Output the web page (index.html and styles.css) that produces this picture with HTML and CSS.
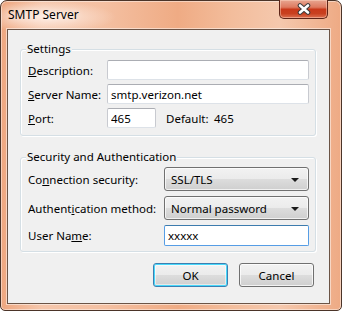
FILE: index.html
```html
<!DOCTYPE html>
<html lang="en">
<head>
    <meta charset="UTF-8">
    <title>SMTP Server</title>
    <link rel="stylesheet" href="styles.css">
</head>
<body>
    <div class="window">
        <div class="titlebar">
            <span class="title">SMTP Server</span>
            <div class="close">
                <svg width="14" height="12" viewBox="0 0 14 12">
                    <path d="M3 2.5 L11 9.5 M11 2.5 L3 9.5" stroke="#3c3c3c" stroke-width="4.6" stroke-linecap="round"/>
                    <path d="M3 2.5 L11 9.5 M11 2.5 L3 9.5" stroke="#fff" stroke-width="2.6" stroke-linecap="round"/>
                </svg>
            </div>
        </div>
        <div class="client">
            <fieldset class="group settings">
                <legend>Settings</legend>
                <label><u>D</u>escription:</label>
                <input class="field" type="text" value="">
                <label><u>S</u>erver Name:</label>
                <input class="field" type="text" value="smtp.verizon.net">
                <label><u>P</u>ort:</label>
                <div class="port">
                    <input class="field short" type="text" value="465">
                    <span class="default-label">Default:</span>
                    <span>465</span>
                </div>
            </fieldset>

            <fieldset class="group security">
                <legend>Security and Authentication</legend>
                <label>Co<u>n</u>nection security:</label>
                <div class="combo"><span>SSL/TLS</span><span class="arrow"></span></div>
                <label>Authent<u>i</u>cation method:</label>
                <div class="combo"><span>Normal password</span><span class="arrow"></span></div>
                <label>User Na<u>m</u>e:</label>
                <input class="field focus" type="text" value="xxxxx">
            </fieldset>

            <div class="buttons">
                <button class="btn default-btn">OK</button>
                <button class="btn">Cancel</button>
            </div>
        </div>
    </div>
</body>
</html>
```

FILE: styles.css
```css
html, body {
    margin: 0;
    padding: 0;
    background: #fff;
}
body {
    font-family: "Noto Sans", "Open Sans", sans-serif;
    font-size: 11.5px;
    color: #000;
}
.window {
    box-sizing: border-box;
    width: 342px;
    height: 311px;
    border: 1px solid #4b3428;
    border-radius: 7px 7px 5px 5px;
    padding: 0 11px 6px 6px;
    background:
        radial-gradient(ellipse 70px 16px at 45px 16px, rgba(255, 240, 232, 0.9), rgba(255, 240, 232, 0) 100%),
        linear-gradient(90deg, #eea780 0%, #f5c6ab 12%, #f4c0a2 30%, #efab84 52%, #f3bd9c 68%, #f5c8ad 82%, #eeaa84 100%);
    box-shadow: inset 0 0 0 1px rgba(255, 255, 255, 0.45);
}
.titlebar {
    display: flex;
    align-items: flex-start;
    height: 28px;
}
.title {
    margin: 6px 0 0 1px;
    font-size: 12px;
    line-height: 16px;
    text-shadow: 0 0 6px rgba(255, 255, 255, 0.9);
}
.close {
    margin: -1px 2px 0 auto;
    width: 49px;
    height: 19px;
    box-sizing: border-box;
    border: 1px solid #5e2417;
    border-top: none;
    border-radius: 0 0 5px 5px;
    background: linear-gradient(#e8a690 0%, #de7a60 40%, #c9391a 52%, #c8401f 75%, #dc7050 100%);
    box-shadow: inset 0 0 0 1px rgba(255, 220, 200, 0.45);
    display: flex;
    align-items: center;
    justify-content: center;
}
.close svg {
    display: block;
}
.client {
    box-sizing: border-box;
    height: 275px;
    border: 1px solid #6b5446;
    background: #f0f0f0;
    box-shadow: 0 0 0 1px rgba(255, 255, 255, 0.5);
    display: flex;
    flex-direction: column;
}
.group {
    display: grid;
    align-items: center;
    margin: 11px 13px 0 12px;
    border: 1px solid #d5dfe5;
    border-radius: 3px;
    box-shadow: 1px 1px 0 #fff, inset 1px 1px 0 #fff;
    min-width: 0;
}
.group legend {
    margin-left: -2px;
    padding: 0 1px;
    line-height: 16px;
    background: #f0f0f0;
}
.settings {
    grid-template-columns: 79px 202px;
    grid-auto-rows: 20px;
    row-gap: 4px;
    padding: 3px 6px 7px 7px;
}
.security {
    grid-template-columns: 136px 145px;
    grid-template-rows: 24px 24px 21px;
    row-gap: 5px;
    margin-top: 13px;
    padding: 2px 6px 5px 7px;
}
.field {
    box-sizing: border-box;
    height: 100%;
    width: 100%;
    margin: 0;
    padding: 0 3px;
    font: inherit;
    color: #000;
    background: #fff;
    border: 1px solid #c8cad0;
    border-top-color: #abadb3;
    border-bottom-color: #dde2e8;
    border-radius: 2px;
    outline: none;
}
.field.focus {
    border-color: #569de5;
    border-top-color: #3d7bad;
}
.port {
    display: flex;
    align-items: center;
    height: 100%;
}
.field.short {
    flex: 0 0 49px;
    width: 49px;
}
.default-label {
    flex: 0 0 48px;
    width: 48px;
    margin-left: 10px;
}
.combo {
    box-sizing: border-box;
    height: 100%;
    display: flex;
    align-items: center;
    justify-content: space-between;
    padding: 0 9px 0 6px;
    border: 1px solid #707070;
    border-radius: 3px;
    background: linear-gradient(#f2f2f2 0%, #ebebeb 50%, #dddddd 50%, #cfcfcf 100%);
    box-shadow: inset 0 0 0 1px rgba(255, 255, 255, 0.7);
}
.arrow {
    width: 0;
    height: 0;
    border-left: 4px solid transparent;
    border-right: 4px solid transparent;
    border-top: 4px solid #1a1a1a;
    margin-top: 1px;
}
.buttons {
    display: flex;
    justify-content: flex-end;
    gap: 11px;
    margin: 11px 15px 0 0;
}
.btn {
    box-sizing: border-box;
    width: 75px;
    height: 24px;
    margin: 0;
    padding: 0;
    font: inherit;
    color: #000;
    border: 1px solid #707070;
    border-radius: 3px;
    background: linear-gradient(#f2f2f2 0%, #ebebeb 50%, #dddddd 50%, #cfcfcf 100%);
    box-shadow: inset 0 0 0 1px rgba(255, 255, 255, 0.75);
}
.default-btn {
    border-color: #3c7fb1;
    box-shadow: inset 0 0 0 1px #48d8fb, inset 0 0 0 2px rgba(255, 255, 255, 0.5);
}
```
